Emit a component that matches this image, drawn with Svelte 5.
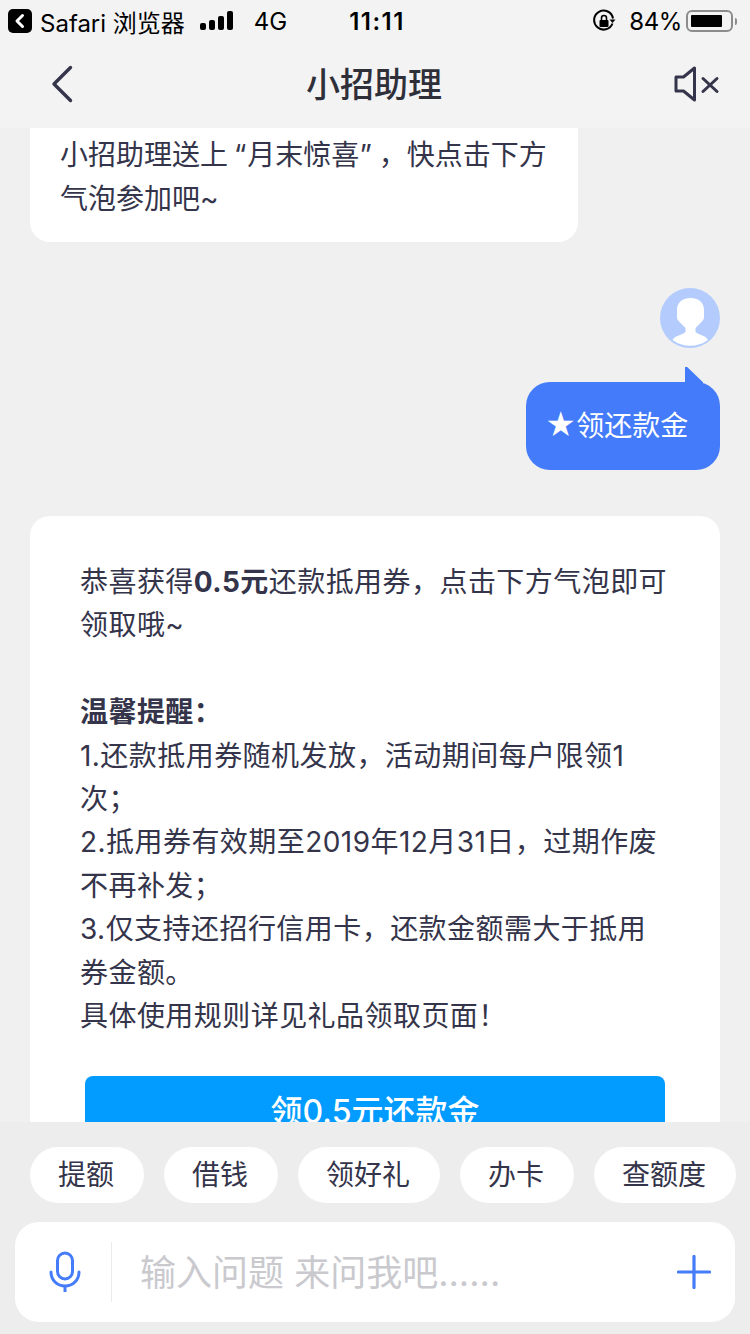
<script>
  const pills = ['提额', '借钱', '领好礼', '办卡', '查额度'];
</script>

<div class="page">
  <header class="top">
    <div class="status">
      <div class="status-left">
        <svg class="back-app" viewBox="0 0 24 24" width="24" height="24"><rect width="24" height="24" rx="5" fill="#000"/><path d="M14.5 6.5 9 12l5.500 5.500" fill="none" stroke="#fff" stroke-width="3" stroke-linecap="round" stroke-linejoin="round"/></svg>
        <span class="carrier">Safari 浏览器</span>
        <svg class="signal" viewBox="0 0 34 20" width="34" height="20"><rect x="0" y="12" width="6" height="7" rx="2"/><rect x="9" y="9" width="6" height="10" rx="2"/><rect x="18" y="5" width="6" height="14" rx="2"/><rect x="27" y="0" width="6" height="19" rx="2"/></svg>
        <span class="net">4G</span>
      </div>
      <div class="time">11:11</div>
      <div class="status-right">
        <svg viewBox="0 0 24 24" width="24" height="24"><path d="M20.500 14.500A9.500 9.500 0 1 1 21 9.500" fill="none" stroke="#000" stroke-width="2"/><path d="M23.500 10.500h-6l3 3.500z" fill="#000"/><rect x="7.500" y="11" width="9" height="7" rx="1" fill="#000"/><path d="M9.500 11V9a2.500 2.500 0 0 1 5 0v2" fill="none" stroke="#000" stroke-width="1.600"/></svg>
        <span class="pct">84%</span>
        <div class="battery"><div class="level"></div></div>
        <div class="nub"></div>
      </div>
    </div>
    <nav class="nav">
      <svg class="chev" viewBox="0 0 24 38" width="24" height="38"><path d="M20.500 2.500 4 19l16.500 16.500" fill="none" stroke="#34344a" stroke-width="3.400" stroke-linecap="round" stroke-linejoin="round"/></svg>
      <h1>小招助理</h1>
      <svg class="mute" viewBox="0 0 46 36" width="46" height="36"><path d="M2 11h7.500L20.500 2v32L9.500 25H2z" fill="none" stroke="#34344a" stroke-width="3" stroke-linejoin="round"/><path d="M29 12.500 43 25.500M43 12.500 29 25.500" stroke="#34344a" stroke-width="3" stroke-linecap="round"/></svg>
    </nav>
  </header>

  <main class="chat">
    <div class="bubble-first">小招助理送上<span class="q-open">“</span>月末惊喜<span class="q-close">”</span>，快点击下方<br />气泡参加吧~</div>

    <div class="outgoing">
      <div class="avatar">
        <svg viewBox="0 0 60 60" width="60" height="60"><circle cx="30" cy="30" r="30" fill="#b3ccfd"/><path d="M30.500 10c-9 0-13.500 5-13.500 12v7c0 2 1 3.500 2.500 5l6 6V44C22 47 15 47.500 12.500 52A30 30 0 0 0 48 52C46 47.500 39 47 35.500 44v-4l6-6c1.500-1.500 2.500-3 2.500-5v-7c0-7-4.500-12-13.500-12z" fill="#fff"/></svg>
      </div>
      <div class="bubble-out"><span class="star">★</span>领还款金</div>
    </div>

    <article class="card">
      <p>恭喜获得<b>0.5元</b>还款抵用券，点击下方气泡即可<br />领取哦~</p>
      <p class="gap"><b>温馨提醒：</b><br />1.还款抵用券随机发放，活动期间每户限领1<br />次；<br />2.抵用券有效期至2019年12月31日，过期作废<br />不再补发；<br />3.仅支持还招行信用卡，还款金额需大于抵用<br />券金额。<br />具体使用规则详见礼品领取页面！</p>
      <button class="cta">领0.5元还款金</button>
    </article>
  </main>

  <footer class="bottom">
    <div class="pills">
      {#each pills as p}
        <span class="pill">{p}</span>
      {/each}
    </div>
    <div class="input">
      <svg class="mic" viewBox="0 0 32 42" width="32" height="42"><rect x="8.500" y="2" width="15" height="26" rx="7.500" fill="none" stroke="#447cf9" stroke-width="3"/><path d="M2 21c0 8 6 14 14 14s14-6 14-14" fill="none" stroke="#447cf9" stroke-width="3" stroke-linecap="round"/><path d="M16 35v6" stroke="#447cf9" stroke-width="3"/></svg>
      <span class="divider"></span>
      <span class="placeholder">输入问题 来问我吧......</span>
      <svg class="plus" viewBox="0 0 34 34" width="34" height="34"><path d="M17 1.500v31M1.500 17h31" stroke="#447cf9" stroke-width="3.200" stroke-linecap="round"/></svg>
    </div>
  </footer>
</div>

<style>
  :global(body) {
    margin: 0;
    background: #f0f0f0;
  }
  .page {
    width: 750px;
    height: 1334px;
    display: flex;
    flex-direction: column;
    overflow: hidden;
    font-family: Inter, "Noto Sans CJK SC", sans-serif;
    color: #34344a;
    background: #f0f0f0;
  }
  .top {
    height: 128px;
    flex: none;
    background: #f3f3f3;
  }
  .status {
    height: 42px;
    display: grid;
    grid-template-columns: 1fr auto 1fr;
    align-items: center;
    padding: 0 8px;
    color: #000;
    font-size: 24px;
  }
  .status-left, .status-right {
    display: flex;
    align-items: center;
  }
  .status-right { justify-content: flex-end; }
  .back-app { margin-right: 8px; }
  .carrier { margin-right: 15px; white-space: nowrap; }
  .signal { margin-right: 20px; }
  .time { font-weight: 600; letter-spacing: 1.500px; margin-left: 4px; }
  .pct { margin: 0 4px 0 13px; letter-spacing: -0.4px; }
  .battery {
    width: 47px;
    height: 22px;
    box-sizing: border-box;
    border: 2px solid #8c8c8c;
    border-radius: 6px;
    padding: 3px;
  }
  .level { width: 84%; height: 100%; background: #000; border-radius: 1px; }
  .nub {
    width: 2px;
    height: 7px;
    margin: 0 5px 0 2px;
    background: #8c8c8c;
    border-radius: 0 2px 2px 0;
  }
  .nav {
    height: 86px;
    display: flex;
    align-items: center;
    justify-content: space-between;
    padding: 0 30px 0 50px;
    position: relative;
  }
  .chev { margin-top: -2px; }
  h1 {
    margin: 0;
    font-size: 34px;
    font-weight: 500;
    color: #2f2f3a;
    line-height: 1;
  }
  .mute { margin-top: -2px; }

  .chat {
    flex: 1;
    min-height: 0;
    overflow: hidden;
    padding: 0 30px;
  }
  .bubble-first {
    width: 548px;
    box-sizing: border-box;
    height: 114px;
    padding: 5px 30px 0;
    background: #fff;
    border-radius: 0 0 20px 20px;
    font-size: 28px;
    line-height: 44px;
    white-space: nowrap;
  }
  .q-open { margin: 0 1px 0 6px; }
  .q-close { margin-right: 7px; }
  .outgoing {
    margin-top: 46px;
    display: flex;
    flex-direction: column;
    align-items: flex-end;
  }
  .avatar { height: 60px; }
  .bubble-out {
    margin-top: 34px;
    position: relative;
    width: 194px;
    height: 88px;
    box-sizing: border-box;
    background: #437bfa;
    border-radius: 24px;
    color: #fff;
    font-size: 28px;
    line-height: 88px;
    padding-left: 19px;
    white-space: nowrap;
  }
  .star { font-size: 30px; line-height: 1; }
  .bubble-out::before {
    content: "";
    position: absolute;
    top: -15px;
    right: 17px;
    width: 18px;
    height: 18px;
    background: #437bfa;
    clip-path: polygon(0 0, 12% 0, 100% 85%, 100% 100%, 0 100%);
  }
  .card {
    margin-top: 46px;
    background: #fff;
    border-radius: 20px;
    padding: 45px 50px 0;
    font-size: 28px;
    line-height: 43.400px;
    letter-spacing: 0.450px;
    white-space: nowrap;
  }
  p { margin: 0; }
  .gap { margin-top: 43.400px; }
  b { font-weight: 700; }
  .cta {
    display: block;
    margin: 38px 0 0 5px;
    width: 580px;
    height: 70px;
    border: 0;
    border-radius: 8px;
    background: #029bff;
    color: #fff;
    font: inherit;
    font-size: 32px;
    font-weight: 500;
    letter-spacing: 0;
    padding: 0;
  }

  .bottom {
    flex: none;
    height: 212px;
    box-sizing: border-box;
    background: #ededed;
    padding: 25px 15px 12px;
  }
  .pills {
    display: flex;
    gap: 20px;
    padding-left: 15px;
  }
  .pill {
    height: 56px;
    box-sizing: border-box;
    padding: 1px 30px 0 28px;
    background: #fff;
    border-radius: 28px;
    font-size: 28px;
    line-height: 55px;
    white-space: nowrap;
  }
  .input {
    margin-top: 19px;
    height: 100px;
    display: flex;
    align-items: center;
    background: #fff;
    border-radius: 24px;
    padding: 0 24px 0 34px;
  }
  .divider {
    width: 1px;
    height: 60px;
    background: #ececec;
    margin: 0 28px 0 30px;
  }
  .placeholder {
    flex: 1;
    font-size: 36px;
    line-height: 1;
    padding-top: 1px;
    color: #c9c9ce;
    white-space: nowrap;
  }
</style>
